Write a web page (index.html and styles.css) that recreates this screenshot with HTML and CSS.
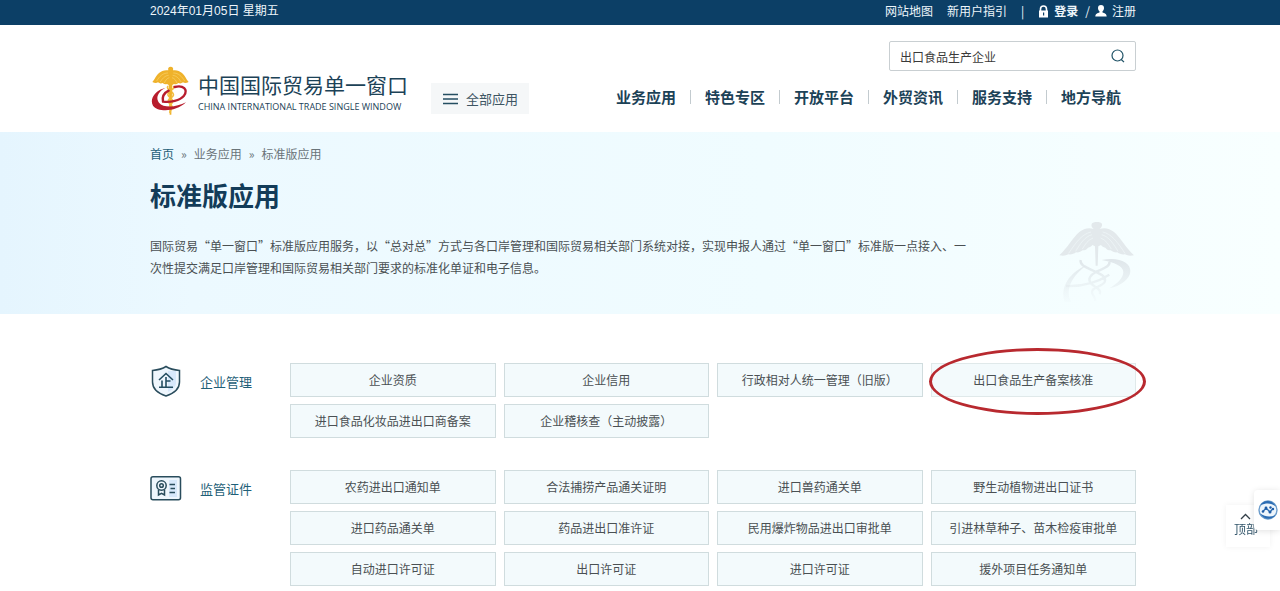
FILE: index.html
```html
<!DOCTYPE html>
<html lang="zh-CN">
<head>
  <meta charset="UTF-8" />
  <meta name="viewport" content="width=device-width, initial-scale=1.0"/>
  <title>标准版应用 - 中国国际贸易单一窗口</title>
  <link rel="stylesheet" href="styles.css">
</head>
<body>
  <div class="topbar">
    <div class="wrap topbar-inner">
      <span class="date">2024年01月05日 星期五</span>
      <div class="top-links">
        <a href="#">网站地图</a>
        <a href="#">新用户指引</a>
        <span class="bar">|</span>
        <a href="#" class="login">
          <svg width="11" height="13" viewBox="0 0 11 13"><path d="M2.5 6V4a3 3 0 0 1 6 0v2" fill="none" stroke="#fff" stroke-width="1.6"/><path fill="#fff" fill-rule="evenodd" d="M1 5.5h9V12.500H1zM5 7.500v3h1.200v-3z"/></svg>
          登录
        </a>
        <span>/</span>
        <a href="#">
          <svg width="12" height="12" viewBox="0 0 12 12"><path fill="#fff" d="M6 0c2 0 3 1.300 3 3 0 1.500-.7 2.600-1.500 3.300v1.200C9.500 8.200 11.500 8.500 11.700 11.500H.3C.5 8.500 2.500 8.200 4.500 7.500V6.300C3.700 5.600 3 4.500 3 3c0-1.700 1-3 3-3z"/></svg>
          注册
        </a>
      </div>
    </div>
  </div>

  <header class="wrap header">
    <a href="#" class="logo">
      <svg class="logo-mark" width="40" height="50" viewBox="18 22 120 150">
        <path fill="#efb22b" d="M80 24c6 0 9 4 7 11 10-2 20 2 27 8 9 8 12 18 20 27-8 4-13 3-17 1-4 4-10 4-14 2-4 4-9 5-13 3l-5 3-1 16-2 73h-5l-2-73-1-16-5-3c-4 2-9 1-13-3-4 2-10 2-14-2-4 2-9 3-17-1 8-9 11-19 20-27 7-6 17-10 28-8-2-7 1-11 7-11z"/>
        <path fill="none" stroke="#fbdc82" stroke-width="1.500" d="M72 43C56 43 46 54 38 67M74 50c-12 1-20 11-26 21M76 57c-8 2-12 9-15 16M88 43c16 0 26 11 34 24M86 50c12 1 20 11 26 21M84 57c8 2 12 9 15 16"/>
        <path fill="none" stroke="#f3bd3d" stroke-width="5" d="M72 82c-9 11 20 16 16 28-4 9-20 10-14 21 5 8 14 10 9 19-3 4-6 6-5 13M88 82c8 10-18 15-16 27 2 9 18 11 13 22-4 7-11 9-9 19"/>
        <path fill="none" stroke="#b81d2d" stroke-width="7" stroke-linecap="round" d="M92 85c26-7 41 8 28 26-13 15-40 21-63 18-3-14 3-26 17-33"/>
        <path fill="#b81d2d" d="M65 87C35 94 15 120 27 141c14 20 68 20 99-10-30 16-68 17-81 1-12-15-1-35 20-45z"/>
        <path fill="#efb22b" d="M78 78h5l-1 44h-3z"/>
      </svg>
      <span class="logo-text">
        <span class="logo-cn">中国国际贸易单一窗口</span>
        <span class="logo-en">CHINA INTERNATIONAL TRADE SINGLE WINDOW</span>
      </span>
    </a>

    <button class="all-apps" type="button">
      <svg width="15" height="12" viewBox="0 0 15 12"><path d="M0 1.500h15M0 6h15M0 10.500h15" stroke="#244e61" stroke-width="1.500"/></svg>
      全部应用
    </button>

    <div class="header-right">
      <form class="search">
        <input type="text" value="出口食品生产企业" aria-label="搜索" />
        <button type="button" aria-label="搜索">
          <svg width="14" height="14" viewBox="0 0 14 14" fill="none" stroke="#1f5266" stroke-width="1.200"><circle cx="6.500" cy="6.500" r="5.500"/><path d="M10.300 10.500L13 13.200"/></svg>
        </button>
      </form>
      <nav>
        <ul class="nav">
          <li><a href="#">业务应用</a></li>
          <li><a href="#">特色专区</a></li>
          <li><a href="#">开放平台</a></li>
          <li><a href="#">外贸资讯</a></li>
          <li><a href="#">服务支持</a></li>
          <li><a href="#">地方导航</a></li>
        </ul>
      </nav>
    </div>
  </header>

  <div class="hero">
    <div class="wrap hero-inner">
      <div class="hero-text">
        <div class="crumbs">
          <a href="#" class="home">首页</a><span>»</span><a href="#">业务应用</a><span>»</span><a href="#">标准版应用</a>
        </div>
        <h1>标准版应用</h1>
        <p>国际贸易“单一窗口”标准版应用服务，以“总对总”方式与各口岸管理和国际贸易相关部门系统对接，实现申报人通过“单一窗口”标准版一点接入、一次性提交满足口岸管理和国际贸易相关部门要求的标准化单证和电子信息。</p>
      </div>
      <svg class="watermark" width="78" height="85" viewBox="54 30 234 255">
        <defs>
          <linearGradient id="fade" gradientUnits="userSpaceOnUse" x1="0" y1="145" x2="0" y2="285">
            <stop offset="0" stop-color="#dfe6ea"/>
            <stop offset="1" stop-color="#dfe6ea" stop-opacity="0"/>
          </linearGradient>
        </defs>
        <path fill="#e3e9ec" d="M155 42c4-8 28-8 31 0 1 7-2 11-7 15 14-5 30-2 43 9 20 17 34 46 60 70-12 2-20 1-27-3-9 1-17-1-23-6-8 1-15-2-20-6-8 0-13-3-16-8-6-1-10-4-13-8l-8 4-2 58h-6l-2-58-8-4c-3 4-7 7-13 8-3 5-8 8-16 8-5 4-12 7-20 6-6 5-14 7-23 6-7 4-15 5-27 3 26-24 40-53 60-70 13-11 29-14 43-9-5-4-8-8-6-15z"/>
        <path fill="none" stroke="#f0f7f9" stroke-width="2" d="M153 66c-26 5-46 32-67 64M156 74c-22 6-36 28-49 50M159 84c-16 6-24 20-32 33M188 66c26 5 46 32 67 64M185 74c22 6 36 28 49 50M182 84c16 6 24 20 32 33"/>
        <path fill="url(#fade)" d="M185 150c50-10 87 6 86 34-1 24-30 45-63 51 24-14 42-31 42-48 0-20-27-29-65-37zM140 166c-48 20-82 63-66 110h20c-20-34 0-77 46-110z"/>
        <path fill="none" stroke="url(#fade)" stroke-width="7" d="M122 150c-4 17 22 24 40 33s39 16 32 33c-8 15-42 16-38 32 2 9 10 13 10 25M208 155c5 16-25 23-40 31-18 9-25 22-16 33 9 12 35 18 27 34M78 228c50 2 92-10 130-34"/>
      </svg>
    </div>
  </div>

  <main class="wrap main">
    <section class="group">
      <div class="group-title">
        <svg width="32" height="32" viewBox="0 0 32 32">
          <path d="M16 1.500c4 2.500 8.500 3.500 13.500 4V17c0 7-6 11.500-13.500 14C8.500 28.500 2.500 24 2.500 17V5.500c5-.5 9.500-1.500 13.500-4z" fill="#eef6fd" stroke="#294c5c" stroke-width="1.500"/>
          <path d="M18 6h8v12c0 4-4 7-8 9z" fill="#d7e8fb"/>
          <path d="M9 15l7-6.500 7 6.500M16 12v10M16 16h4.500M12 15.500V22M9 22.300h14" fill="none" stroke="#244e61" stroke-width="1.600"/>
        </svg>
        <h2>企业管理</h2>
      </div>
      <ul class="tiles">
        <li><a href="#">企业资质</a></li>
        <li><a href="#">企业信用</a></li>
        <li><a href="#">行政相对人统一管理（旧版）</a></li>
        <li class="marked"><a href="#">出口食品生产备案核准</a></li>
        <li><a href="#">进口食品化妆品进出口商备案</a></li>
        <li><a href="#">企业稽核查（主动披露）</a></li>
      </ul>
    </section>

    <section class="group">
      <div class="group-title">
        <svg width="32" height="32" viewBox="0 0 32 32" fill="none" stroke="#294c5c" stroke-width="1.500">
          <rect x="1" y="4.700" width="29.500" height="23" rx="2" fill="#eef6fd"/>
          <path d="M19 8h8v17h-8z" fill="#d7e8fb" stroke="none"/>
          <circle cx="11.500" cy="13.500" r="4.700"/>
          <circle cx="11.500" cy="13.500" r="1.800"/>
          <path d="M8.500 17.500V23l3-1.700 3 1.700v-5.500M19.500 12.500H25M20.500 16.500H25M19.500 20.500H25"/>
        </svg>
        <h2>监管证件</h2>
      </div>
      <ul class="tiles">
        <li><a href="#">农药进出口通知单</a></li>
        <li><a href="#">合法捕捞产品通关证明</a></li>
        <li><a href="#">进口兽药通关单</a></li>
        <li><a href="#">野生动植物进出口证书</a></li>
        <li><a href="#">进口药品通关单</a></li>
        <li><a href="#">药品进出口准许证</a></li>
        <li><a href="#">民用爆炸物品进出口审批单</a></li>
        <li><a href="#">引进林草种子、苗木检疫审批单</a></li>
        <li><a href="#">自动进口许可证</a></li>
        <li><a href="#">出口许可证</a></li>
        <li><a href="#">进口许可证</a></li>
        <li><a href="#">援外项目任务通知单</a></li>
      </ul>
    </section>
  </main>

  <a href="#" class="to-top">
    <svg width="11" height="7" viewBox="0 0 11 7"><path d="M1 6l4.500-4.500L10 6" fill="none" stroke="#333f48" stroke-width="1.300"/></svg>
    <span>顶部</span>
  </a>
  <button class="helper" type="button" aria-label="助手">
    <svg width="20" height="20" viewBox="0 0 20 20">
      <circle cx="10" cy="10" r="9" fill="#edf5fc" stroke="#6b9ccb" stroke-width="1.400"/>
      <path d="M2.500 5C6-.5 14-.5 18 6.500 13 2.500 8 3 2.500 5zM2 13.500c4 6.500 11.500 7 15.500 1.500-5 2.500-10 2-15.500-1.500z" fill="#2b6cb3"/>
      <path d="M5 11.500L8 8l4 4 3-3.500" fill="none" stroke="#2b6cb3" stroke-width="1.300"/>
      <g fill="#1d5ca6"><circle cx="5" cy="11.500" r="1.300"/><circle cx="8" cy="8" r="1.400"/><circle cx="12" cy="12" r="1.500"/><circle cx="12.500" cy="7.500" r="1.200"/><circle cx="15" cy="9" r="1.200"/></g>
    </svg>
  </button>
</body>
</html>
```
FILE: styles.css
```css
:root {
  --navy: #0c3f66;
  --dark: #1c4257;
  --teal: #1f5f78;
  --text: #4a5053;
  --tile-border: #d0dcde;
}

* {
  box-sizing: border-box;
}

body {
  margin: 0;
  font-family: "Noto Sans CJK SC", sans-serif;
  font-size: 12px;
  color: var(--text);
  background: #fff;
}

a {
  color: inherit;
  text-decoration: none;
}

ul {
  list-style: none;
  margin: 0;
  padding: 0;
}

button {
  font-family: inherit;
  border: none;
  padding: 0;
  cursor: pointer;
}

svg {
  flex: none;
}

.wrap {
  padding-left: 150px;
  padding-right: 144px;
}

/* top bar */
.topbar {
  background: var(--navy);
  color: #eef6fb;
}

.topbar-inner {
  display: flex;
  justify-content: space-between;
  height: 25px;
  line-height: 22px;
}

.date {
  font-family: "Liberation Sans", "Noto Sans CJK SC", sans-serif;
}

.top-links {
  display: flex;
  gap: 14px;
}

.top-links a {
  display: flex;
  align-items: center;
  gap: 5px;
  height: 22px;
}

.top-links .login {
  font-weight: bold;
  margin-right: -7px;
}

.top-links .login ~ a {
  margin-left: -9px;
}

/* header */
.header {
  display: flex;
  align-items: flex-end;
  padding-top: 16px;
  padding-bottom: 16px;
}

.logo {
  display: flex;
  gap: 8px;
  color: var(--dark);
}

.logo-text {
  display: flex;
  flex-direction: column;
  padding-top: 3px;
}

.logo-cn {
  font-size: 21px;
  line-height: 30px;
}

.logo-en {
  font-family: "Open Sans", sans-serif;
  font-size: 9px;
  line-height: 16px;
  white-space: nowrap;
}

.all-apps {
  display: flex;
  align-items: center;
  gap: 8px;
  height: 31px;
  margin: 0 0 2px 23px;
  padding: 0 11px 0 12px;
  font-size: 13px;
  color: #3d5563;
  background: #f5f7f8;
}

.header-right {
  display: flex;
  flex-direction: column;
  align-items: flex-end;
  gap: 15px;
  margin-left: auto;
  padding-bottom: 8px;
}

.search {
  display: flex;
  align-items: center;
  width: 247px;
  height: 30px;
  padding: 0 10px;
  border: 1px solid #c9cfd2;
  border-radius: 2px;
}

.search input {
  flex: 1;
  min-width: 0;
  padding: 0;
  border: none;
  outline: none;
  font: inherit;
  color: #3a3a3a;
}

.search button {
  display: flex;
  background: none;
}

.nav {
  display: flex;
  margin-right: 15px;
  font-size: 15px;
  font-weight: bold;
  line-height: 22px;
  color: var(--dark);
}

.nav li {
  display: flex;
  align-items: center;
}

.nav li + li::before {
  content: "";
  width: 1px;
  height: 14px;
  margin: 0 14px;
  background: #c3cbcf;
}

/* hero */
.hero {
  background: linear-gradient(90deg, #e5f5fe 0%, #ecf9ff 15%, #f0fcff 60%, #f8ffff 100%);
}

.hero-inner {
  display: flex;
  align-items: flex-end;
  justify-content: space-between;
  padding-top: 14px;
  padding-bottom: 9px;
}

.hero-text {
  padding-bottom: 26px;
}

.crumbs {
  display: flex;
  gap: 7px;
  line-height: 16px;
  color: #6a7479;
}

.crumbs .home {
  color: var(--teal);
}

.hero h1 {
  margin: 15px 0 22px;
  font-size: 26px;
  line-height: 36px;
  color: #133c59;
}

.hero p {
  max-width: 820px;
  margin: 0;
  line-height: 22px;
}

/* application groups */
.main {
  padding-top: 49px;
  padding-bottom: 5px;
}

.group {
  display: flex;
  align-items: flex-start;
}

.group + .group {
  margin-top: 32px;
}

.group-title {
  display: flex;
  align-items: center;
  gap: 18px;
  flex: none;
  width: 140px;
  height: 36px;
}

.group-title h2 {
  margin: 0;
  font-size: 13px;
  font-weight: normal;
  color: var(--teal);
}

.tiles {
  flex: 1;
  display: grid;
  grid-template-columns: repeat(4, 1fr);
  gap: 7px 8px;
}

.tiles li {
  position: relative;
}

.tiles a {
  display: block;
  height: 34px;
  line-height: 32px;
  text-align: center;
  border: 1px solid var(--tile-border);
  background: #f3fafc;
}

.marked::after {
  content: "";
  position: absolute;
  inset: -15px -10px -18px -2px;
  border: 3px solid #b8292f;
  border-radius: 50%;
  pointer-events: none;
}

.tiles .marked a {
  border-color: #e0e9ea;
}

/* floating buttons */
.to-top {
  position: fixed;
  right: 10px;
  bottom: 44px;
  display: flex;
  flex-direction: column;
  gap: 1px;
  width: 44px;
  height: 42px;
  padding: 8px 0 0 8px;
  line-height: 16px;
  color: #33566b;
  background: #fff;
  box-shadow: 0 0 6px rgba(0, 0, 0, 0.06);
}

.to-top svg {
  margin-left: 6px;
}

.helper {
  position: fixed;
  right: 0;
  bottom: 61px;
  display: flex;
  align-items: center;
  width: 26px;
  height: 40px;
  padding-left: 4px;
  background: #fff;
  border-radius: 4px 0 0 4px;
  box-shadow: 0 1px 6px rgba(0, 0, 0, 0.12);
}
```
